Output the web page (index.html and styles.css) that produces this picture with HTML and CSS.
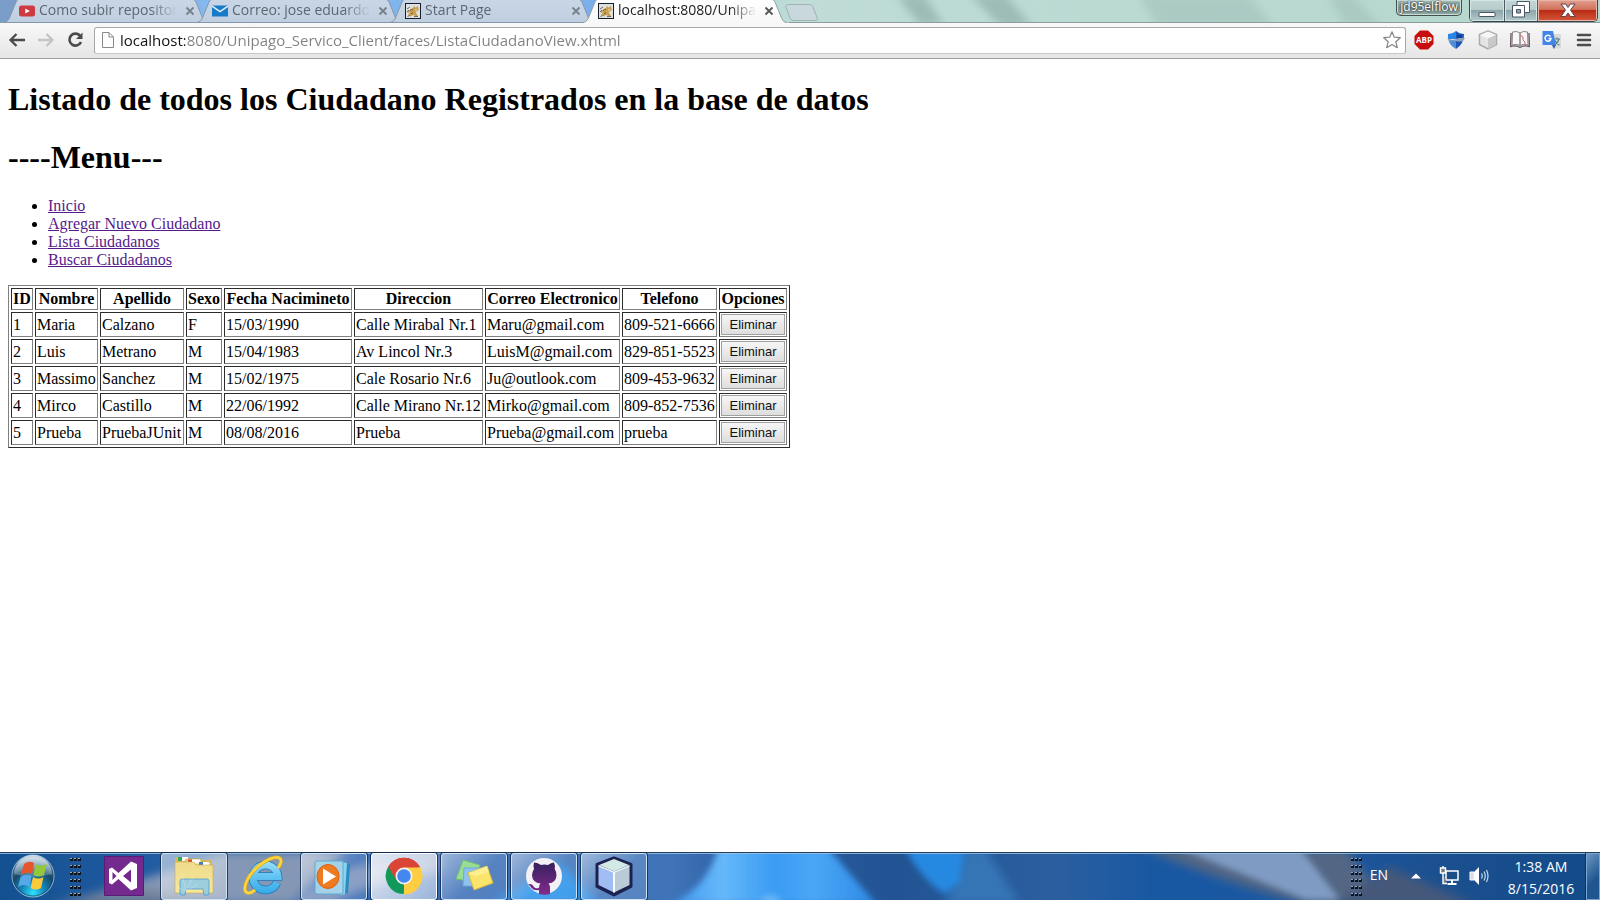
FILE: index.html
```html
<!DOCTYPE html>
<html lang="es">
<head>
<meta charset="utf-8">
<title>Listado de Ciudadanos</title>
<link rel="stylesheet" href="styles.css">
</head>
<body>
<svg class="defs" aria-hidden="true">
  <defs>
    <linearGradient id="tabIdle" x1="0" y1="0" x2="0" y2="1"><stop offset="0" stop-color="#c9d6e6"/><stop offset="1" stop-color="#c0cfe0"/></linearGradient>
    <linearGradient id="tabActive" x1="0" y1="0" x2="0" y2="1"><stop offset="0" stop-color="#ffffff"/><stop offset="1" stop-color="#f7f7f7"/></linearGradient>
    <symbol id="tabIdleShape" viewBox="0 0 206 24"><path d="M0 22.500Q3.500 22 5 19L12 2Q13 -1 16 -1H187Q191 -1 192 2L199 19Q200.500 22.500 204 22.500Z" fill="url(#tabIdle)" stroke="#8497ac"/></symbol>
    <symbol id="tabActiveShape" viewBox="0 0 206 24"><path d="M0 24V22.500Q3.500 22 5 19L12 2Q13 -1 16 -1H187Q191 -1 192 2L199 19Q200.500 22.500 204 22.500H206V24Z" fill="url(#tabActive)"/><path d="M0 22.500Q3.500 22 5 19L12 2Q13 -1 16 -1H187Q191 -1 192 2L199 19Q200.500 22.500 204 22.500" fill="none" stroke="#8fa0a6"/></symbol>
    <symbol id="close" viewBox="0 0 16 16"><path d="M4.500 4.500l7 7M11.500 4.500l-7 7" stroke="currentColor" stroke-width="1.800" fill="none"/></symbol>
    <symbol id="tomcat" viewBox="0 0 16 16"><rect x=".5" y=".5" width="15" height="15" fill="#dde1df" stroke="#16202c"/><path d="M8 5l1-2 1.500 1.500L13 3l.8 4L12 8.500l-1.500.5L13 13l-2 .5L8.500 12 5 13.500 3 12l2-3-2.500 1L3 8z" fill="#c9a052"/><path d="M2 6l3-2M2 9l2-2M2.500 13.500l2-1M9 13.500h4" stroke="#6d6d62" fill="none"/><path d="M5 7.500l3-1.500M6 11l2-1.500" stroke="#7a5c28" fill="none"/><path d="M10 7h2" stroke="#f1dfaa"/></symbol>
    <symbol id="grip" viewBox="0 0 12 40"><g id="gripRow"><path d="M0 1.500h3M4 1.500h3M8 1.500h3" stroke="#0b1520" stroke-width="3"/><path d="M0 .5h2M4 .5h2M8 .5h2" stroke="#9aa9b8"/></g><use href="#gripRow" y="7"/><use href="#gripRow" y="14"/><use href="#gripRow" y="21"/><use href="#gripRow" y="28"/><use href="#gripRow" y="35"/></symbol>
  </defs>
</svg>

<header class="browser">
  <div class="tabstrip">
    <svg class="glass" viewBox="0 0 1600 23" preserveAspectRatio="none" aria-hidden="true">
      <defs><linearGradient id="glassFill"><stop offset="0" stop-color="#7b9dca"/><stop offset=".08" stop-color="#7498cb"/><stop offset=".13" stop-color="#86baf0"/><stop offset=".37" stop-color="#79b0e9"/><stop offset=".46" stop-color="#b5d8d8"/><stop offset=".5" stop-color="#bfdcd6"/><stop offset="1" stop-color="#b5d7cd"/></linearGradient><filter id="soft4"><feGaussianBlur stdDeviation="4"/></filter></defs>
      <rect width="1600" height="23" fill="url(#glassFill)"/>
      <g filter="url(#soft4)" fill="#9ebcb5"><path d="M896 -5h28l20 30h-24zM970 -5h36l26 32h-30z"/><path d="M1138 -5h110l26 32h-116zM1328 -5h24l30 32h-36z" opacity=".5"/></g>
      <path d="M0 22.500H1600" stroke="#8b9e9d"/>
    </svg>
    <div class="tabs" role="tablist">
      <div class="tab" role="tab"><svg class="shape"><use href="#tabIdleShape"/></svg>
        <svg class="fav" viewBox="0 0 16 16"><rect y="2.500" width="16" height="11" rx="2.500" fill="#cf3a41"/><path d="M6.300 5.500v5l4.500-2.500z" fill="#fff"/></svg>
        <span class="label">Como subir repositor</span><button class="x" aria-label="Cerrar"><svg><use href="#close"/></svg></button></div>
      <div class="tab" role="tab"><svg class="shape"><use href="#tabIdleShape"/></svg>
        <svg class="fav" viewBox="0 0 16 16"><path d="M0 2.500h16v11H0z" fill="#177bc9"/><path d="M0 3l8 5.500L16 3" fill="none" stroke="#e9f2fa" stroke-width="1.500"/></svg>
        <span class="label">Correo: jose eduardo</span><button class="x" aria-label="Cerrar"><svg><use href="#close"/></svg></button></div>
      <div class="tab" role="tab"><svg class="shape"><use href="#tabIdleShape"/></svg>
        <svg class="fav"><use href="#tomcat"/></svg>
        <span class="label">Start Page</span><button class="x" aria-label="Cerrar"><svg><use href="#close"/></svg></button></div>
      <div class="tab active" role="tab" aria-selected="true"><svg class="shape"><use href="#tabActiveShape"/></svg>
        <svg class="fav"><use href="#tomcat"/></svg>
        <span class="label">localhost:8080/Unipa</span><button class="x" aria-label="Cerrar"><svg><use href="#close"/></svg></button></div>
      <button class="newtab" aria-label="Nueva pestaña"><svg viewBox="0 0 34 18"><path d="M3 .5H24.500Q27 .5 28 3L32.500 14.500Q33 16.500 31 16.500H9Q6 16.500 5 14L.8 3Q.5 .5 3 .5Z" fill="#c9d8dc" stroke="#9fb3b3"/></svg></button>
    </div>
    <button class="user">jd95elflow</button>
    <div class="winctl">
      <button class="min" aria-label="Minimizar"><svg viewBox="0 0 20 20"><rect x="2" y="12.500" width="16" height="4" rx=".5" fill="#fff" stroke="#4a5565"/></svg></button>
      <button class="max" aria-label="Restaurar"><svg viewBox="0 0 20 20"><g fill="#fff" stroke="#4a5565"><path d="M6 1.500h12.500v11H6z"/><path d="M1.500 5.500h12v11.500h-12z"/><path d="M5.500 9.500h4v3.500h-4z" fill="#8fa5ab"/></g></svg></button>
      <button class="cls" aria-label="Cerrar ventana"><svg viewBox="0 0 20 20"><path d="M3 4h4.500L10 7.500 12.500 4H17l-4.500 6 4.500 6.500h-4.500L10 13l-2.500 3.500H3L7.500 10z" fill="#fff" stroke="#5b4650"/></svg></button>
    </div>
  </div>

  <div class="toolbar">
    <div class="nav">
      <button aria-label="Atrás"><svg viewBox="0 0 18 18" fill="none" stroke="#4a4a4a" stroke-width="2.300"><path d="M17 9H3M8.500 3L2.500 9l6 6"/></svg></button>
      <button aria-label="Adelante"><svg viewBox="0 0 18 18" fill="none" stroke="#c4c4c4" stroke-width="2.300"><path d="M1 9h14M9.500 3l6 6-6 6"/></svg></button>
      <button aria-label="Recargar"><svg viewBox="0 0 18 18"><path d="M14.300 5A6 6 0 1 0 15 11" fill="none" stroke="#4a4a4a" stroke-width="2.600"/><path d="M16.500 1.500V8H10z" fill="#4a4a4a"/></svg></button>
    </div>
    <div class="omnibox">
      <svg class="doc" viewBox="0 0 12 16"><path d="M.5 .5H7L11.500 5V15.500H.5ZM7 .5V5h4.500" fill="#fdfdfd" stroke="#8a8a8a"/></svg>
      <input class="url" type="text" aria-label="Dirección" value="localhost:8080/Unipago_Servico_Client/faces/ListaCiudadanoView.xhtml">
      <button class="star" aria-label="Marcador"><svg viewBox="0 0 18 18"><path d="M9 .8l2.300 5.400 6 .5-4.500 4 1.500 6L9 13.500l-5.300 3.200 1.500-6-4.500-4 6-.5z" fill="#fff" stroke="#858585" stroke-width="1.200" stroke-linejoin="round"/></svg></button>
    </div>
    <div class="ext">
      <button aria-label="Adblock Plus"><svg viewBox="0 0 20 20"><path d="M6 .5h8L19.500 6v8L14 19.500H6L.5 14V6z" fill="#c70d0d"/><text x="10" y="13" class="abp">ABP</text></svg></button>
      <button aria-label="Protección"><svg viewBox="0 0 20 20"><path d="M2 4Q7 4 10 1Q13 4 18 4V9H2Z" fill="#7fa9dc"/><path d="M10 1Q13 4 18 4Q18 14 10 19Z" fill="#1d57b5"/><path d="M2 4Q7 4 10 1V9H2Z" fill="#2886e8"/><path d="M2.500 10H10V19Q4 16 2.500 10Z" fill="#4e8fd8"/><path d="M1 8Q6 11 10 9T19 8L17 11Q13 12 10 11T3 11Z" fill="#8ea3bb"/><path d="M11 5h5v3h-5z" fill="#0c3e9b"/></svg></button>
      <button aria-label="Cubo"><svg viewBox="0 0 20 20"><path d="M10 1l8.500 3.500v10L10 19l-8.500-4.500v-10z" fill="#e4e4e4" stroke="#aaa" stroke-width="1.500"/><path d="M2 5l8 3.500L18 5l-8-3.500z" fill="#f7f7f7"/><path d="M10 8.500L18 5v9.500L10 19z" fill="#c9c9c9"/></svg></button>
      <button aria-label="Diccionario"><svg viewBox="0 0 20 20"><path d="M1 3L.5 16.500Q6 15 10 17.500 14 15 19.500 16.500L19 3" fill="#ccc" stroke="#6c5a68" stroke-width="1.300"/><path d="M2.500 2Q7 .5 10 3v12.500Q7 13.500 2 15zM17.500 2Q13 .5 10 3v12.500Q13 13.500 18 15z" fill="#f7f7f7" stroke="#8b8389"/><path d="M10 5l3 2v3l2 2v3" fill="none" stroke="#d66"/></svg></button>
      <button aria-label="Traductor"><svg viewBox="0 0 20 20"><path d="M8 4h11v14.500H10z" fill="#dadada"/><path d="M.5 1H11l3 14H.5z" fill="#4384e8"/><path d="M10 15h4l-2 4z" fill="#2f62b8"/><path d="M8.500 6.500A3 3 0 1 0 9 8.500H6.500" fill="none" stroke="#fff" stroke-width="1.500"/><path d="M12.500 9H18M15 7.500V9M17 9q-1 4-4.500 6M13 10.500q1.500 3 4.500 4.500" fill="none" stroke="#577d86" stroke-width="1.200"/></svg></button>
      <button aria-label="Menú"><svg viewBox="0 0 20 20"><path d="M4 5h12M4 10h12M4 15h12" stroke="#4c4c4c" stroke-width="2.600" stroke-linecap="round"/></svg></button>
    </div>
  </div>
</header>

<main class="page">
  <h1>Listado de todos los Ciudadano Registrados en la base de datos</h1>
  <h1>----Menu---</h1>
  <ul>
    <li><a href="#inicio">Inicio</a></li>
    <li><a href="#agregar">Agregar Nuevo Ciudadano</a></li>
    <li><a href="#lista">Lista Ciudadanos</a></li>
    <li><a href="#buscar">Buscar Ciudadanos</a></li>
  </ul>
  <table>
    <colgroup><col class="c-id"><col class="c-nombre"><col class="c-apellido"><col class="c-sexo"><col class="c-fecha"><col class="c-dir"><col class="c-correo"><col class="c-tel"><col class="c-op"></colgroup>
    <thead><tr><th>ID</th><th>Nombre</th><th>Apellido</th><th>Sexo</th><th>Fecha Nacimineto</th><th>Direccion</th><th>Correo Electronico</th><th>Telefono</th><th>Opciones</th></tr></thead>
    <tbody>
      <tr><td>1</td><td>Maria</td><td>Calzano</td><td>F</td><td>15/03/1990</td><td>Calle Mirabal Nr.1</td><td>Maru@gmail.com</td><td>809-521-6666</td><td><button class="del">Eliminar</button></td></tr>
      <tr><td>2</td><td>Luis</td><td>Metrano</td><td>M</td><td>15/04/1983</td><td>Av Lincol Nr.3</td><td>LuisM@gmail.com</td><td>829-851-5523</td><td><button class="del">Eliminar</button></td></tr>
      <tr><td>3</td><td>Massimo</td><td>Sanchez</td><td>M</td><td>15/02/1975</td><td>Cale Rosario Nr.6</td><td>Ju@outlook.com</td><td>809-453-9632</td><td><button class="del">Eliminar</button></td></tr>
      <tr><td>4</td><td>Mirco</td><td>Castillo</td><td>M</td><td>22/06/1992</td><td>Calle Mirano Nr.12</td><td>Mirko@gmail.com</td><td>809-852-7536</td><td><button class="del">Eliminar</button></td></tr>
      <tr><td>5</td><td>Prueba</td><td>PruebaJUnit</td><td>M</td><td>08/08/2016</td><td>Prueba</td><td>Prueba@gmail.com</td><td>prueba</td><td><button class="del">Eliminar</button></td></tr>
    </tbody>
  </table>
</main>

<footer class="taskbar">
  <svg class="wall" viewBox="0 0 1600 48" preserveAspectRatio="none" aria-hidden="true">
    <defs>
      <linearGradient id="wallFill"><stop offset="0" stop-color="#135090"/><stop offset=".08" stop-color="#1f5a9f"/><stop offset=".22" stop-color="#3467b4"/><stop offset=".42" stop-color="#3f74b8"/><stop offset=".46" stop-color="#2c5fa2"/><stop offset=".56" stop-color="#225494"/><stop offset=".66" stop-color="#2b5f9f"/><stop offset=".72" stop-color="#1858a3"/><stop offset=".83" stop-color="#1c57a0"/><stop offset=".9" stop-color="#1b508f"/><stop offset="1" stop-color="#134a88"/></linearGradient>
      <linearGradient id="sky"><stop offset="0" stop-color="#3d97ee"/><stop offset=".25" stop-color="#66b8fa"/><stop offset=".5" stop-color="#3a9cf3"/><stop offset=".7" stop-color="#4aa6f6"/><stop offset="1" stop-color="#2e8ae6"/></linearGradient>
      <filter id="soft5"><feGaussianBlur stdDeviation="5"/></filter><filter id="soft2"><feGaussianBlur stdDeviation="3"/></filter>
    </defs>
    <rect width="1600" height="48" fill="url(#wallFill)"/>
    <g filter="url(#soft5)">
      <path d="M60 52L150 25 225 0H345L290 52Z" fill="#8497b5"/>
      <path d="M50 52L130 34 230 52Z" fill="#73819a"/>
      <path d="M290 52L350 15 440 0V20Q370 30 330 52Z" fill="#7991bb"/>
      <path d="M490 52L560 10 600 52Z" fill="#2691ea"/>
      <path d="M965 -4H985L1020 52H945Z" fill="#3474b6"/>
      <path d="M1140 -4H1345L1390 52H1310Q1250 40 1140 -4Z" fill="#526684"/>
      <path d="M1390 15L1480 55H1330Z" fill="#45597a"/>
    </g>
    <g filter="url(#soft2)">
      <path d="M672 52Q708 34 718 -4H828L876 52Z" fill="url(#sky)"/>
      <path d="M758 52Q772 35 782 52Z" fill="#83cafe" opacity=".7"/>
      <path d="M905 -4H965L960 30 945 42Q922 28 905 -4Z" fill="#2789e1"/>
      <path d="M1178 -4H1300L1340 48H1306Z" fill="#7f9bc3"/>
    </g>
    <path d="M0 .5H1600" stroke="#253f5b"/><path d="M0 1.500H1600" stroke="#9fc7eb" opacity=".8"/>
  </svg>
  <button class="start" aria-label="Inicio"><svg viewBox="0 0 44 44">
    <defs><radialGradient id="orb" cx=".5" cy=".9" r=".8"><stop offset="0" stop-color="#2fe0ff"/><stop offset=".35" stop-color="#1286b8"/><stop offset=".7" stop-color="#174769"/><stop offset="1" stop-color="#7d9db7"/></radialGradient><linearGradient id="gl" x2="0" y2="1"><stop offset="0" stop-color="#eef6fb" stop-opacity=".8"/><stop offset="1" stop-color="#bcd2e0" stop-opacity=".25"/></linearGradient></defs>
    <circle cx="22" cy="22" r="21" fill="url(#orb)" stroke="#8ebbd8"/><circle cx="22" cy="22" r="20" fill="none" stroke="#173b5a" opacity=".6"/><path d="M3 20A19 19 0 0 1 41 20Q22 26 3 20Z" fill="url(#gl)"/>
    <path d="M13 10Q18 6 23 9L21 20Q15 17 10 21Z" fill="#e9552a"/><path d="M24.500 10Q29 13 36 10L33 21Q28 24 22.500 21Z" fill="#93c83e"/><path d="M9.500 23Q15 19 20.500 22L18.500 33Q13 29 7 33Z" fill="#56a9e6"/><path d="M22 23Q27 26 32.500 23L30 34Q25 37 19.500 34Z" fill="#fbc93a"/></svg></button>
  <svg class="grip"><use href="#grip"/></svg>
  <nav class="apps">
    <button class="app" aria-label="Visual Studio"><svg viewBox="0 0 44 44"><path d="M2.500 2.500h39v39h-39z" fill="#74298f" stroke="#591b74"/><path d="M29 7.500l6 2.500v24l-6 2.500-12.500-11.500L10 30.500 7 29V15l3-1.500 6.500 5.500zM29 15.500L21 22l8 6.500zM10.500 18v8l4-4z" fill="#fff" fill-rule="evenodd"/></svg></button>
    <button class="app open pale" aria-label="Explorador"><svg viewBox="0 0 44 44">
      <defs><linearGradient id="fold" x2="0" y2="1"><stop offset="0" stop-color="#efdc8c"/><stop offset="1" stop-color="#f6e69a"/></linearGradient></defs>
      <path d="M3 5l2-2h11l1 3h23v32H3z" fill="#d9bb5c"/><path d="M6 3h4v4H6z" fill="#35a853"/><path d="M10 3h6v4h-6z" fill="#fff"/><path d="M13 7l1-2h15l1 3h9v29H13z" fill="#ead279" stroke="#c5a243" stroke-width=".6"/><path d="M16 5.500h4v4h-4z" fill="#d84b30"/><path d="M20 5.500h8v4h-8z" fill="#fff"/><path d="M27 8h4v4h-4z" fill="#3b7fc4"/><path d="M31 8h6v4h-6z" fill="#fff"/>
      <path d="M3 8h19l2 3h17v28H3z" fill="url(#fold)" stroke="#c9a94d" stroke-width=".6"/><path d="M10 25h25q2 0 2 2v13q-2 2-5 1l-1-6h-17l-1 6q-3 1-5-1V27q0-2 2-2z" fill="#8dcaea" fill-opacity=".85" stroke="#4f9dca" stroke-width=".8"/><path d="M14 37L5 33M14 37L10 20M14 37l7-14M14 37l11-6" stroke="#fff" stroke-width=".4" opacity=".6"/></svg></button>
    <button class="app" aria-label="Internet Explorer"><svg viewBox="0 0 44 44">
      <defs><linearGradient id="ie" gradientUnits="userSpaceOnUse" x1="0" y1="5" x2="0" y2="40"><stop offset="0" stop-color="#a3e2fb"/><stop offset=".5" stop-color="#62c4f2"/><stop offset="1" stop-color="#36a9e8"/></linearGradient></defs>
      <path d="M35 28.500A12.500 12.500 0 1 1 36 22.500H13" fill="none" stroke="#1e79bd" stroke-width="8.500"/><path d="M35 28.500A12.500 12.500 0 1 1 36 22.500H13" fill="none" stroke="url(#ie)" stroke-width="7"/><path d="M36 14Q42 5 36 3.500 30 2.500 20 9.500 8 18 4 29 1 38 6 39 9 39.500 13 36" fill="none" stroke="#e0a91c" stroke-width="3.600"/><path d="M36 14Q42 5 36 3.500 30 2.500 20 9.500 8 18 4 29 1 38 6 39 9 39.500 13 36" fill="none" stroke="#fbd63f" stroke-width="2.400"/></svg></button>
    <button class="app open" aria-label="Reproductor"><svg viewBox="0 0 44 44"><path d="M33 9l5 1-2 29-5 1z" fill="#278dbf"/><path d="M29 8l6 1-2 31-5 1z" fill="#8ad2ef"/><path d="M3 9q0-2 2-2h26v31q0 2-2 2H5q-2 0-2-2z" fill="#a7d7eb" fill-opacity=".9" stroke="#5ca9cc"/><ellipse cx="16" cy="22.500" rx="11" ry="12" fill="#ef7b20" stroke="#d95f10"/><path d="M11 14.500v16L24 22.500z" fill="#fff"/></svg></button>
    <button class="app open bright" aria-label="Chrome"><svg viewBox="0 0 44 44"><path d="M22 22L6.200 12.800A18.300 18.300 0 0 1 37.800 12.800Z" fill="#db4437"/><path d="M22 22L37.800 12.800A18.300 18.300 0 0 1 22 40.300Z" fill="#ffcd41"/><path d="M22 22L22 40.300A18.300 18.300 0 0 1 6.200 12.800Z" fill="#12985a"/><path d="M22 13.500h16.200A18.300 18.300 0 0 0 6.200 12.800L14.600 26.200Z" fill="#db4437"/><path d="M29.400 26.200L21 40.300A18.300 18.300 0 0 0 38.200 13.500H22Z" fill="#ffcd41"/><circle cx="22" cy="22" r="8.500" fill="#f2f2f2"/><circle cx="22" cy="22" r="6.800" fill="#4487ef"/></svg></button>
    <button class="app open" aria-label="Notas"><svg viewBox="0 0 44 44"><path d="M11 6l17 5-5 17-19-3z" fill="#98dd91" stroke="#6cbd71"/><path d="M12 14h17v18H11z" fill="#8fc3ef" stroke="#6da9db"/><path d="M16 19l19-7 6 17-19 7z" fill="#fbe46b" stroke="#d4b740"/><path d="M16 19l19-7 2 6-13 4z" fill="#fff3a1" opacity=".7"/></svg></button>
    <button class="app open" aria-label="GitHub"><svg viewBox="0 0 44 44"><defs><linearGradient id="gh" x2="0" y2="1"><stop offset="0" stop-color="#36205f"/><stop offset="1" stop-color="#832b8c"/></linearGradient></defs><circle cx="22" cy="22" r="18" fill="#f3f0f6"/><path d="M12 8.500q4 0 7 2.500 3-.8 7 0 3-2.500 6-2.500 1.500 3.500.7 6.500 2 3 1.800 6.500-.5 7-8 8 1.500 2 1.500 4v6.500q-5 1.500-11 0V36q-5 1-7.500-2-1.500-3-3.500-3.500 4-1.500 6 2.500 2 2 5 .7 0-2.700 1.500-4.200-8-1-8.500-8 0-3.500 2-6.500-1-3 0-6.500z" fill="url(#gh)"/></svg></button>
    <button class="app open" aria-label="NetBeans"><svg viewBox="0 0 44 44"><path d="M22 4l17 6.500v22L22 41 5 32.500v-22z" fill="#1c2150" stroke="#1c2150" stroke-width="3" stroke-linejoin="round"/><path d="M22 5l15 6-15 6.500L7 11z" fill="#d2e9e5"/><path d="M6.500 12L22 18.500v20L6.500 31z" fill="#9fbdf2"/><path d="M37.500 12L22 18.500v20L37.500 31z" fill="#b9cbd6"/><path d="M21 18h2v20.500h-2zM6.500 11L22 17.500 37.500 11v1.500L22 19 6.500 12.500z" fill="#f4fbff"/></svg></button>
  </nav>
  <div class="tray">
    <svg class="grip"><use href="#grip"/></svg>
    <button class="lang">EN</button>
    <button class="more" aria-label="Mostrar iconos ocultos"><svg viewBox="0 0 10 6"><path d="M0 5.500L5 .5l5 5z" fill="#fff"/></svg></button>
    <button class="sys" aria-label="Red"><svg viewBox="0 0 20 20"><path d="M7 5h12v9H7z" fill="#1d4d85" stroke="#fff" stroke-width="1.500"/><path d="M13 14v3M8.500 18h9" stroke="#fff" stroke-width="2"/><path d="M1.500 2h5v5h-5zM4 0v2M4 7v10.500h4" fill="#777f84" stroke="#fff" stroke-width="1.400"/></svg></button>
    <button class="sys" aria-label="Volumen"><svg viewBox="0 0 20 20"><path d="M1 6h4v8H1z" fill="#d5dbe1" stroke="#fff"/><path d="M5 6l5-5v18l-5-5z" fill="#fff"/><path d="M12.500 7.500q1.500 2.500 0 5M15 5.500q2.500 4.500 0 9M17.500 4q3 6 0 12" fill="none" stroke="#c7dcef" stroke-width="1.200"/></svg></button>
    <button class="clock"><span>1:38 AM</span><span>8/15/2016</span></button>
    <button class="desk" aria-label="Mostrar escritorio"></button>
  </div>
</footer>
</body>
</html>
```
FILE: styles.css
```css
* { box-sizing: border-box; }
html, body { height: 100%; }
body { margin: 0; display: flex; flex-direction: column; background: #fff; overflow: hidden; font-family: "Open Sans", sans-serif; }
button { border: 0; padding: 0; margin: 0; background: none; font: inherit; color: inherit; }
svg { display: block; }
.defs { position: absolute; width: 0; height: 0; }

/* tab strip */
.tabstrip { position: relative; display: flex; height: 23px; padding-left: 4px; align-items: flex-start; }
.glass { position: absolute; inset: 0; width: 100%; height: 100%; }
.tabs { display: flex; flex: 1; }
.tab { position: relative; display: flex; align-items: center; width: 193px; height: 23px; padding: 0 0 1px 15px; color: #5d6772; font-size: 14px; }
.tab.active { z-index: 2; color: #222; }
.shape { position: absolute; left: 0; top: 0; width: 206px; height: 24px; }
.fav, .label, .x { position: relative; }
.fav { flex: none; width: 16px; height: 16px; margin-right: 4px; }
.label { flex: none; width: 143px; padding-bottom: 2px; white-space: nowrap; line-height: 20px; -webkit-mask-image: linear-gradient(to right, #000 112px, transparent 138px); mask-image: linear-gradient(to right, #000 112px, transparent 138px); }
.x { color: #76808a; }
.x svg { width: 16px; height: 16px; }
.active .x { color: #555; }
.newtab { position: relative; padding: 3px 0 0 9px; }
.newtab svg { width: 34px; height: 18px; }
.user { position: relative; width: 66px; height: 16px; margin-right: 7px; padding-bottom: 2px; border: 1px solid #43504e; border-top: 0; border-radius: 0 0 5px 5px; background: linear-gradient(#a4bdb8, #7d9792 50%, #8ea9a3); box-shadow: inset 0 0 0 1px #c8dcd8; color: #fff; font-size: 12px; line-height: 13px; text-shadow: 0 0 2px #333, 0 0 2px #333; }
.winctl { position: relative; display: flex; height: 22px; margin-right: 2px; border: 1px solid #39424e; border-top: 0; border-radius: 0 0 5px 5px; overflow: hidden; }
.winctl button { display: flex; justify-content: center; border-right: 1px solid #4b5964; background: linear-gradient(#c3d6d6, #b7cccb 45%, #8ca5a8 50%, #b3cbcc); box-shadow: inset 0 0 0 1px #d5e4e4; }
.winctl svg { width: 20px; height: 20px; }
.winctl .min { width: 35px; }
.winctl .max { width: 33px; }
.winctl .cls { width: 59px; border-right: 0; background: linear-gradient(#e0a08f, #d2705a 45%, #b92c14 50%, #d4573a); box-shadow: inset 0 0 0 1px #e9b5a6; }

/* toolbar */
.toolbar { position: relative; display: flex; align-items: center; height: 36px; padding: 0 6px 1px 8px; border-bottom: 1px solid #a0a0a0; background: linear-gradient(#f8f8f8, #e6e6e6); }
.nav { display: flex; gap: 11px; width: 86px; }
.nav svg { width: 18px; height: 18px; }
.omnibox { flex: 1; display: flex; align-items: center; height: 27px; padding: 0 4px 0 7px; border: 1px solid #a8a8a8; border-bottom-color: #c8c8c8; border-radius: 3px; background: #fff; }
.doc { width: 12px; height: 16px; margin-right: 6px; }
.url { flex: 1; height: 25px; padding: 0 0 1px; border: 0; outline: 0; font: 15px "Open Sans", sans-serif; color: transparent; background: linear-gradient(to right, #111 65px, #808080 65px); -webkit-background-clip: text; background-clip: text; }
.star svg { width: 18px; height: 18px; }
.ext { display: flex; gap: 12px; padding-left: 8px; }
.ext svg { width: 20px; height: 20px; }
.abp { font: bold 8px "Open Sans", sans-serif; fill: #fff; text-anchor: middle; }

/* document */
.page { flex: 1; padding: 0 8px; overflow: hidden; background: #fff; color: #000; font: 16px/18px "Liberation Serif", serif; }
.page h1 { margin: 22px 0; font-size: 32px; line-height: 36px; }
.page ul { margin: 0 0 16px; padding-left: 40px; }
.page a { color: #551a8b; }
.page table { border: 1px solid; border-color: #808080 #2b2b2b #2b2b2b #808080; border-spacing: 2px; }
.page th, .page td { padding: 1px; border: 1px solid; border-color: #2b2b2b #808080 #808080 #2b2b2b; white-space: nowrap; }
.page th { height: 22px; }
.c-id { width: 22px; }
.c-nombre { width: 63px; }
.c-apellido { width: 84px; }
.c-sexo { width: 36px; }
.c-fecha { width: 128px; }
.c-dir { width: 129px; }
.c-correo { width: 135px; }
.c-tel { width: 95px; }
.c-op { width: 68px; }
.del { display: block; width: 100%; height: 21px; border: 1px solid #a0a0a0; background: linear-gradient(#f6f6f6, #dedede); color: #111; font: 13px "Liberation Sans", sans-serif; }

/* taskbar */
.taskbar { position: relative; display: flex; flex: none; height: 48px; padding-left: 11px; color: #fff; overflow: hidden; }
.wall { position: absolute; inset: 0; width: 100%; height: 100%; }
.start, .apps, .tray, .taskbar .grip { position: relative; }
.start svg { width: 44px; height: 44px; }
.grip { flex: none; width: 12px; height: 40px; margin-top: 6px; }
.start + .grip { margin-left: 15px; }
.apps { display: flex; flex: 1; gap: 4px; margin: 1px 0 0 9px; }
.app { display: flex; justify-content: center; width: 66px; height: 47px; border: 1px solid transparent; border-radius: 3px; }
.app svg { width: 44px; height: 44px; }
.app.open { border-color: #cfe2f4; background: linear-gradient(135deg, rgba(255,255,255,.5), rgba(255,255,255,.15) 55%, rgba(255,255,255,.12)); box-shadow: 0 0 0 1px rgba(15,40,75,.8); }
.app.pale { background: linear-gradient(135deg, rgba(255,255,255,.55), rgba(255,255,255,.3)); }
.app.bright { border-color: #fff; background: linear-gradient(135deg, rgba(255,255,255,.85), rgba(255,255,255,.5)); }
.tray { display: flex; align-items: center; }
.tray .grip { align-self: flex-start; }
.lang { margin-left: 7px; padding-bottom: 3px; font-size: 14px; }
.more { margin-left: 23px; }
.more svg { width: 10px; height: 6px; }
.sys { margin-left: 18px; }
.sys + .sys { margin-left: 10px; }
.sys svg { width: 20px; height: 20px; }
.clock { display: flex; flex-direction: column; align-items: center; margin-left: 16px; padding-top: 3px; width: 72px; font-size: 14px; line-height: 22px; }
.desk { align-self: stretch; width: 14px; margin: 1px 0 0 9px; border: 1px solid #7ea6cc; background: linear-gradient(135deg, #6b97c2, #1f5590 60%); box-shadow: -1px 0 0 #16324f; }
```
